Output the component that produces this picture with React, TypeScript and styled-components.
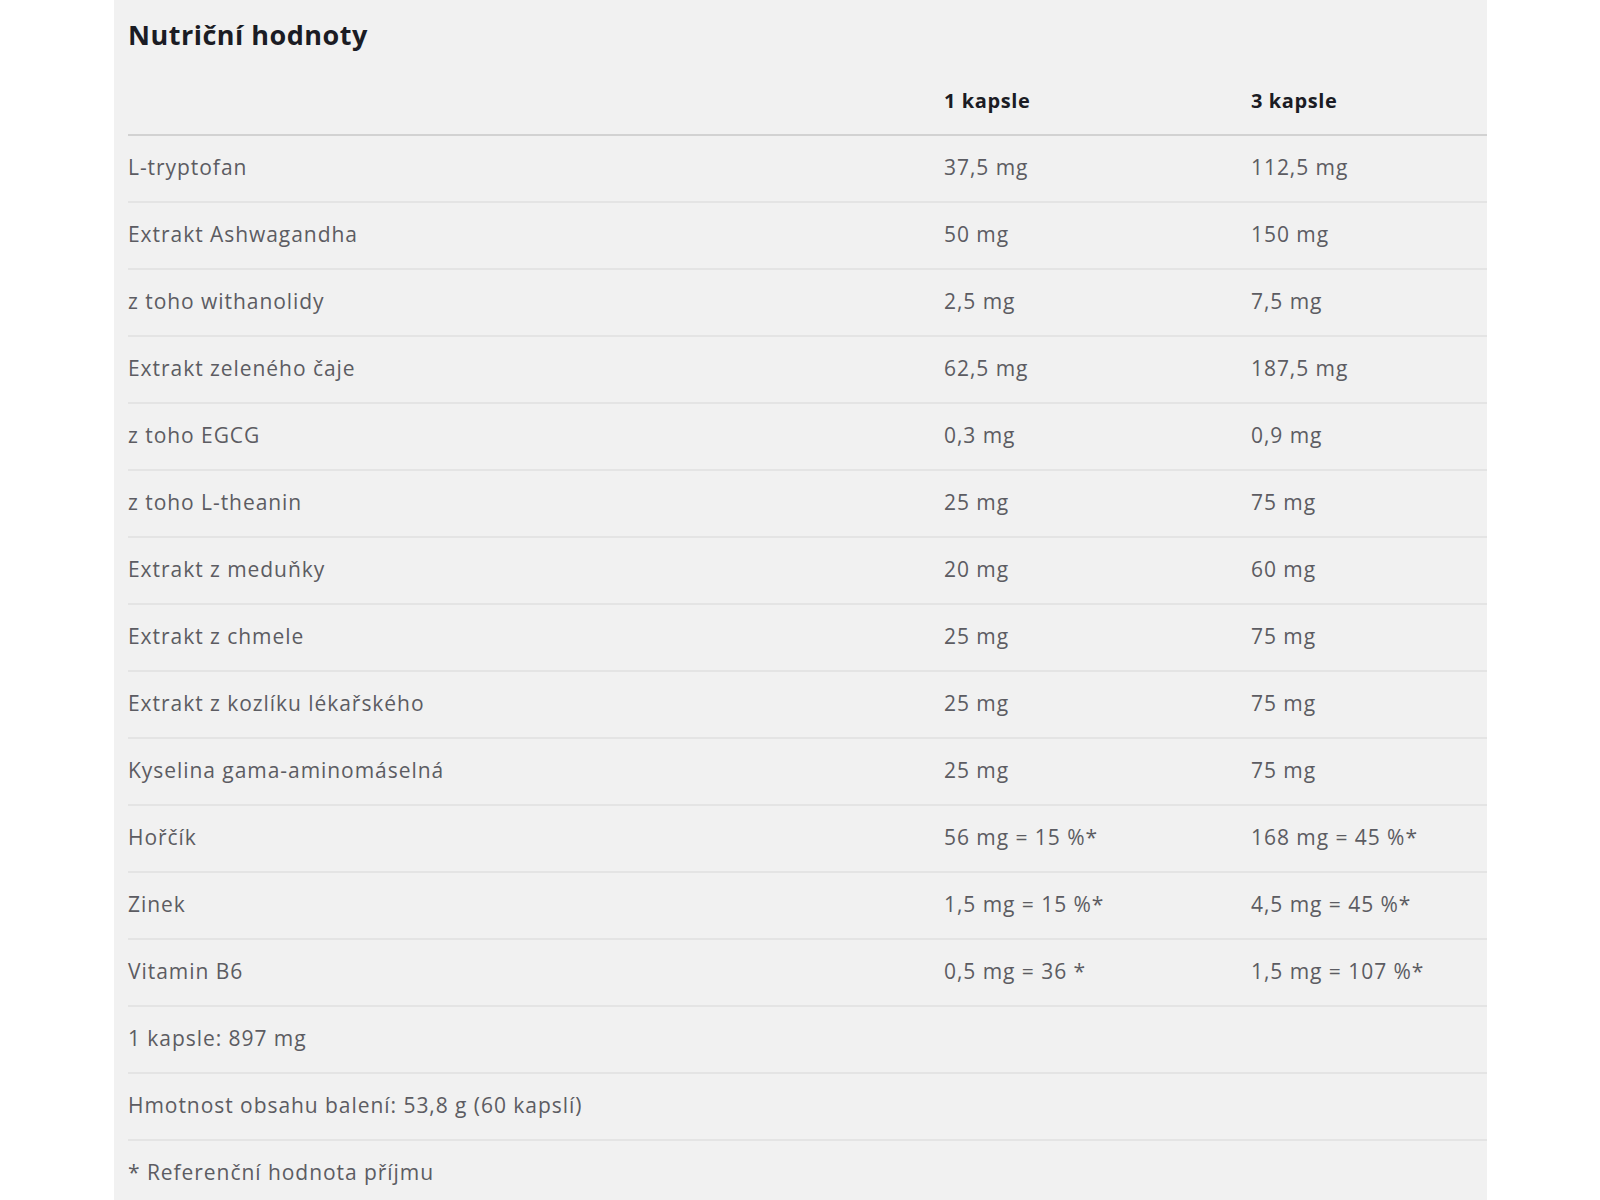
import styled, { createGlobalStyle } from "styled-components";

const GlobalStyle = createGlobalStyle`
  body {
    margin: 0;
    background: #ffffff;
    font-family: "Open Sans", "Liberation Sans", sans-serif;
  }
`;

const colors = {
  panel: "#f1f1f1",
  text: "#5c5c62",
  dark: "#1b1c24",
  headLine: "#d2d2d2",
  rowLine: "#e4e4e4",
};

const Panel = styled.section`
  margin-left: 114px;
  width: 1373px;
  min-height: 1200px;
  padding-left: 14px;
  box-sizing: border-box;
  background: ${colors.panel};
`;

const Title = styled.h2`
  margin: 0;
  height: 69px;
  padding-bottom: 1px;
  box-sizing: border-box;
  display: flex;
  align-items: center;
  font-size: 27px;
  font-weight: 700;
  letter-spacing: 0.5px;
  color: ${colors.dark};
`;

const Row = styled.div<{ $head?: boolean }>`
  display: grid;
  grid-template-columns: 816px 307px 1fr;
  align-items: center;
  height: 67px;
  padding-bottom: 3px;
  box-sizing: border-box;
  border-bottom: 2px solid ${(p) => (p.$head ? colors.headLine : colors.rowLine)};
  font-size: ${(p) => (p.$head ? "20px" : "21px")};
  font-weight: ${(p) => (p.$head ? 700 : 400)};
  color: ${(p) => (p.$head ? colors.dark : colors.text)};
  letter-spacing: ${(p) => (p.$head ? "0.6px" : "0.95px")};
`;

const Cell = styled.div`
  white-space: nowrap;
`;

const WideCell = styled.div`
  grid-column: 1 / -1;
  white-space: nowrap;
`;

const rows: [string, string, string][] = [
  ["L-tryptofan", "37,5 mg", "112,5 mg"],
  ["Extrakt Ashwagandha", "50 mg", "150 mg"],
  ["z toho withanolidy", "2,5 mg", "7,5 mg"],
  ["Extrakt zeleného čaje", "62,5 mg", "187,5 mg"],
  ["z toho EGCG", "0,3 mg", "0,9 mg"],
  ["z toho L-theanin", "25 mg", "75 mg"],
  ["Extrakt z meduňky", "20 mg", "60 mg"],
  ["Extrakt z chmele", "25 mg", "75 mg"],
  ["Extrakt z kozlíku lékařského", "25 mg", "75 mg"],
  ["Kyselina gama-aminomáselná", "25 mg", "75 mg"],
  ["Hořčík", "56 mg = 15 %*", "168 mg = 45 %*"],
  ["Zinek", "1,5 mg = 15 %*", "4,5 mg = 45 %*"],
  ["Vitamin B6", "0,5 mg = 36 *", "1,5 mg = 107 %*"],
];

const notes = [
  "1 kapsle: 897 mg",
  "Hmotnost obsahu balení: 53,8 g (60 kapslí)",
  "* Referenční hodnota příjmu",
];

export default function App() {
  return (
    <>
      <GlobalStyle />
      <Panel>
        <Title>Nutriční hodnoty</Title>
        <Row $head>
          <Cell />
          <Cell>1 kapsle</Cell>
          <Cell>3 kapsle</Cell>
        </Row>
        {rows.map(([name, one, three]) => (
          <Row key={name}>
            <Cell>{name}</Cell>
            <Cell>{one}</Cell>
            <Cell>{three}</Cell>
          </Row>
        ))}
        {notes.map((note) => (
          <Row key={note}>
            <WideCell>{note}</WideCell>
          </Row>
        ))}
      </Panel>
    </>
  );
}
